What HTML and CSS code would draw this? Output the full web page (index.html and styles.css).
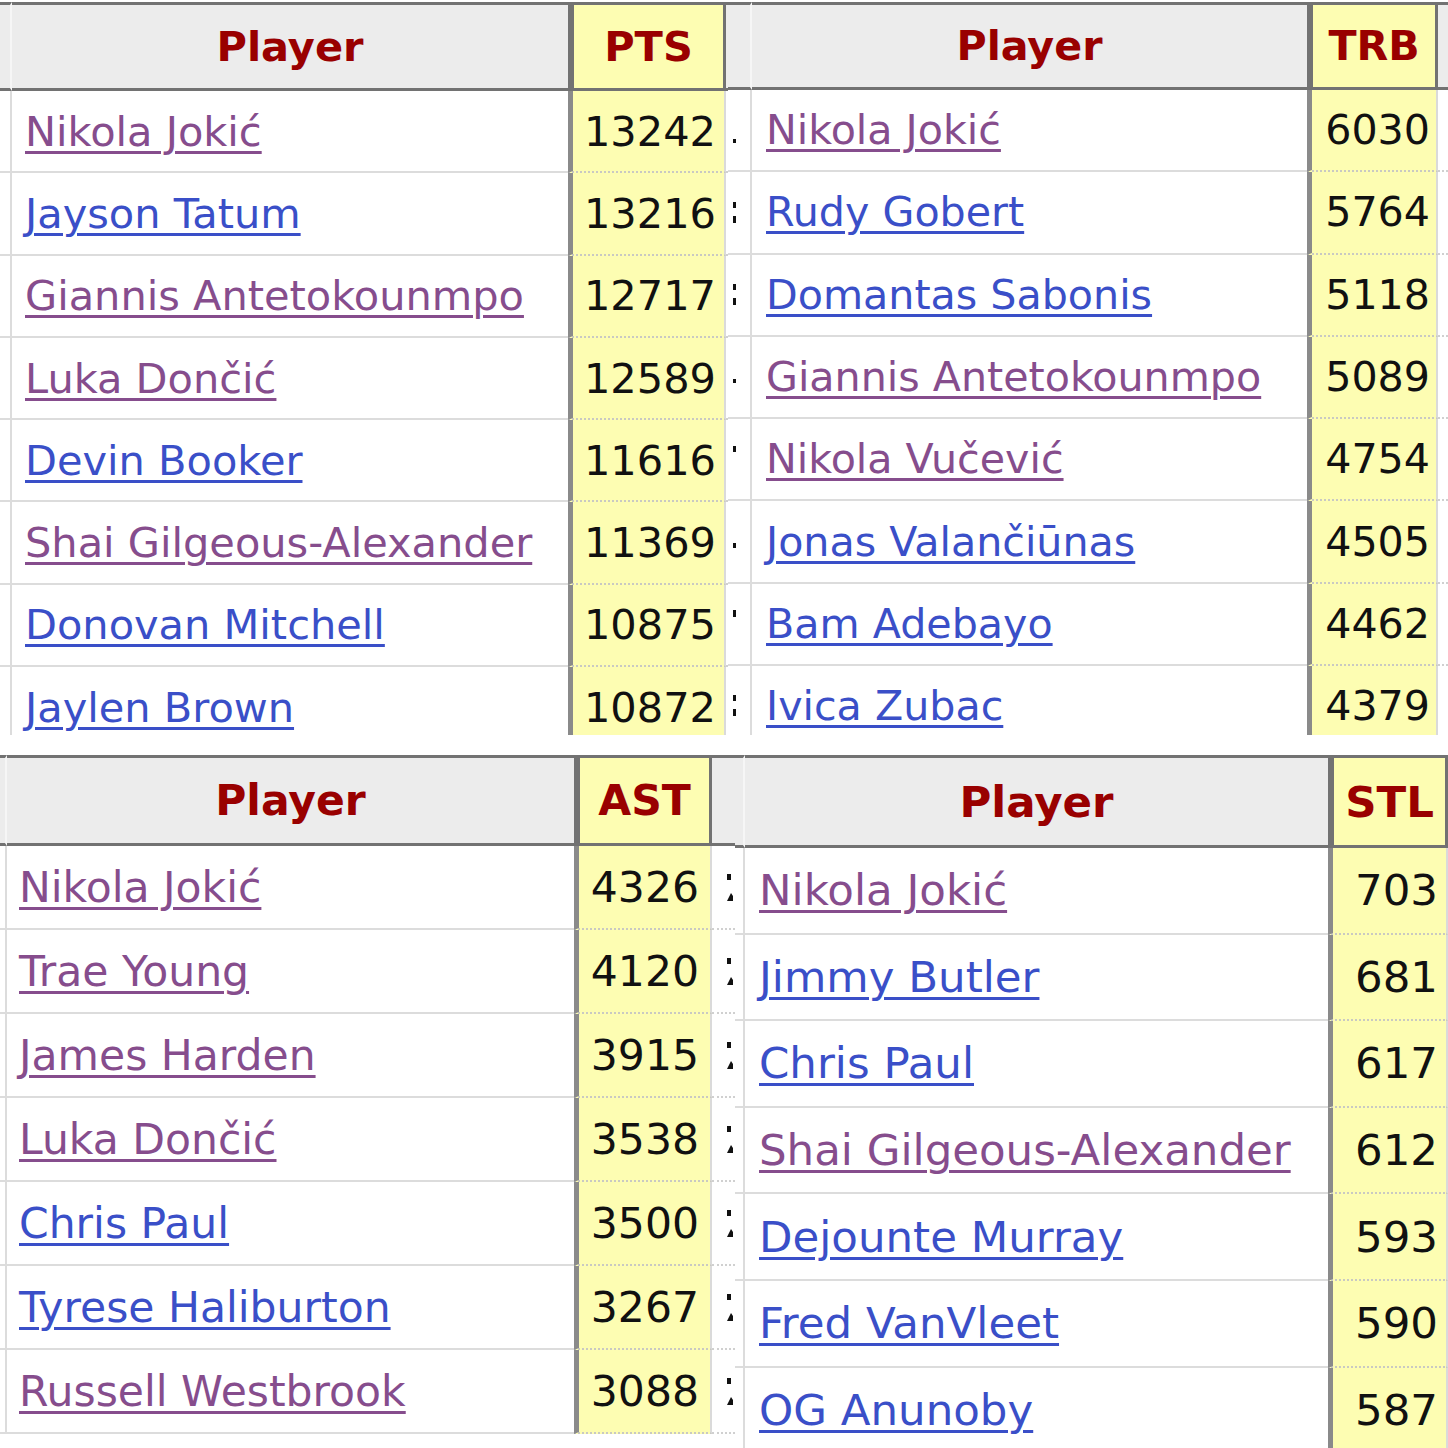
FILE: index.html
```html
<!DOCTYPE html>
<html lang="en">
<head>
<meta charset="utf-8">
<title>Career leaders</title>
<link rel="stylesheet" href="styles.css">
</head>
<body>
<main class="collage">
  <div class="band band-top">
    <section class="panel p1">
      <div class="c cut h"></div><div class="c pl h">Player</div><div class="c st h">PTS</div><div class="c cutr h"></div>

      <div class="c cut d"></div><div class="c pl d"><a class="v" href="#">Nikola Jokić</a></div><div class="c st d">13242</div><div class="c cutr d"></div>
      <div class="c cut d"></div><div class="c pl d"><a class="u" href="#">Jayson Tatum</a></div><div class="c st d">13216</div><div class="c cutr d"></div>
      <div class="c cut d"></div><div class="c pl d"><a class="v" href="#">Giannis Antetokounmpo</a></div><div class="c st d">12717</div><div class="c cutr d"></div>
      <div class="c cut d"></div><div class="c pl d"><a class="v" href="#">Luka Dončić</a></div><div class="c st d">12589</div><div class="c cutr d"></div>
      <div class="c cut d"></div><div class="c pl d"><a class="u" href="#">Devin Booker</a></div><div class="c st d">11616</div><div class="c cutr d"></div>
      <div class="c cut d"></div><div class="c pl d"><a class="v" href="#">Shai Gilgeous-Alexander</a></div><div class="c st d">11369</div><div class="c cutr d"></div>
      <div class="c cut d"></div><div class="c pl d"><a class="u" href="#">Donovan Mitchell</a></div><div class="c st d">10875</div><div class="c cutr d"></div>
      <div class="c cut d"></div><div class="c pl d"><a class="u" href="#">Jaylen Brown</a></div><div class="c st d">10872</div><div class="c cutr d"></div>
    </section>

    <section class="panel p2">
      <div class="c cut h"></div><div class="c pl h">Player</div><div class="c st h">TRB</div><div class="c cutr h"></div>

      <div class="c cut d"><svg class="frag" viewBox="0 0 4 32" width="4" height="32"><rect x="0" y="25" width="3" height="4"/></svg></div><div class="c pl d"><a class="v" href="#">Nikola Jokić</a></div><div class="c st d">6030</div><div class="c cutr d"></div>
      <div class="c cut d"><svg class="frag" viewBox="0 0 4 32" width="4" height="32"><rect x="0" y="6" width="3" height="6"/><rect x="0" y="20" width="3" height="7"/></svg></div><div class="c pl d"><a class="u" href="#">Rudy Gobert</a></div><div class="c st d">5764</div><div class="c cutr d"></div>
      <div class="c cut d"><svg class="frag" viewBox="0 0 4 32" width="4" height="32"><rect x="0" y="5" width="3" height="6"/><rect x="0" y="19" width="3" height="7"/></svg></div><div class="c pl d"><a class="u" href="#">Domantas Sabonis</a></div><div class="c st d">5118</div><div class="c cutr d"></div>
      <div class="c cut d"><svg class="frag" viewBox="0 0 4 32" width="4" height="32"><rect x="0" y="18" width="3" height="4"/></svg></div><div class="c pl d"><a class="v" href="#">Giannis Antetokounmpo</a></div><div class="c st d">5089</div><div class="c cutr d"></div>
      <div class="c cut d"><svg class="frag" viewBox="0 0 4 32" width="4" height="32"><rect x="0" y="3" width="3" height="6"/></svg></div><div class="c pl d"><a class="v" href="#">Nikola Vučević</a></div><div class="c st d">4754</div><div class="c cutr d"></div>
      <div class="c cut d"><svg class="frag" viewBox="0 0 4 32" width="4" height="32"><rect x="0" y="17" width="3" height="5"/></svg></div><div class="c pl d"><a class="u" href="#">Jonas Valančiūnas</a></div><div class="c st d">4505</div><div class="c cutr d"></div>
      <div class="c cut d"><svg class="frag" viewBox="0 0 4 32" width="4" height="32"><rect x="0" y="2" width="3" height="7"/></svg></div><div class="c pl d"><a class="u" href="#">Bam Adebayo</a></div><div class="c st d">4462</div><div class="c cutr d"></div>
      <div class="c cut d"><svg class="frag" viewBox="0 0 4 32" width="4" height="32"><rect x="0" y="5" width="3" height="6"/><rect x="0" y="19" width="3" height="7"/></svg></div><div class="c pl d"><a class="u" href="#">Ivica Zubac</a></div><div class="c st d">4379</div><div class="c cutr d"></div>
    </section>
  </div>

  <div class="band band-bottom">
    <section class="panel p3">
      <div class="c cut h"></div><div class="c pl h">Player</div><div class="c st h">AST</div><div class="c cutr h"></div>

      <div class="c cut d"></div><div class="c pl d"><a class="v" href="#">Nikola Jokić</a></div><div class="c st d">4326</div><div class="c cutr d"><svg class="frag2" viewBox="0 0 6 32" width="6" height="32"><rect x="0" y="3" width="4" height="6"/><polygon points="0,30 6,30 6,25 4,22"/></svg></div>
      <div class="c cut d"></div><div class="c pl d"><a class="v" href="#">Trae Young</a></div><div class="c st d">4120</div><div class="c cutr d"><svg class="frag2" viewBox="0 0 6 32" width="6" height="32"><rect x="0" y="3" width="4" height="6"/><polygon points="0,30 6,30 6,25 4,22"/></svg></div>
      <div class="c cut d"></div><div class="c pl d"><a class="v" href="#">James Harden</a></div><div class="c st d">3915</div><div class="c cutr d"><svg class="frag2" viewBox="0 0 6 32" width="6" height="32"><rect x="0" y="3" width="4" height="6"/><polygon points="0,30 6,30 6,25 4,22"/></svg></div>
      <div class="c cut d"></div><div class="c pl d"><a class="v" href="#">Luka Dončić</a></div><div class="c st d">3538</div><div class="c cutr d"><svg class="frag2" viewBox="0 0 6 32" width="6" height="32"><rect x="0" y="3" width="4" height="6"/><polygon points="0,30 6,30 6,25 4,22"/></svg></div>
      <div class="c cut d"></div><div class="c pl d"><a class="u" href="#">Chris Paul</a></div><div class="c st d">3500</div><div class="c cutr d"><svg class="frag2" viewBox="0 0 6 32" width="6" height="32"><rect x="0" y="3" width="4" height="6"/><polygon points="0,30 6,30 6,25 4,22"/></svg></div>
      <div class="c cut d"></div><div class="c pl d"><a class="u" href="#">Tyrese Haliburton</a></div><div class="c st d">3267</div><div class="c cutr d"><svg class="frag2" viewBox="0 0 6 32" width="6" height="32"><rect x="0" y="3" width="4" height="6"/><polygon points="0,30 6,30 6,25 4,22"/></svg></div>
      <div class="c cut d"></div><div class="c pl d"><a class="v" href="#">Russell Westbrook</a></div><div class="c st d">3088</div><div class="c cutr d"><svg class="frag2" viewBox="0 0 6 32" width="6" height="32"><rect x="0" y="3" width="4" height="6"/><polygon points="0,30 6,30 6,25 4,22"/></svg></div>
    </section>

    <section class="panel p4">
      <div class="c cut h"></div><div class="c pl h">Player</div><div class="c st h">STL</div>

      <div class="c cut d"></div><div class="c pl d"><a class="v" href="#">Nikola Jokić</a></div><div class="c st d">703</div>
      <div class="c cut d"></div><div class="c pl d"><a class="u" href="#">Jimmy Butler</a></div><div class="c st d">681</div>
      <div class="c cut d"></div><div class="c pl d"><a class="u" href="#">Chris Paul</a></div><div class="c st d">617</div>
      <div class="c cut d"></div><div class="c pl d"><a class="v" href="#">Shai Gilgeous-Alexander</a></div><div class="c st d">612</div>
      <div class="c cut d"></div><div class="c pl d"><a class="u" href="#">Dejounte Murray</a></div><div class="c st d">593</div>
      <div class="c cut d"></div><div class="c pl d"><a class="u" href="#">Fred VanVleet</a></div><div class="c st d">590</div>
      <div class="c cut d"></div><div class="c pl d"><a class="u" href="#">OG Anunoby</a></div><div class="c st d">587</div>
    </section>
  </div>
</main>
</body>
</html>
```

FILE: styles.css
```css
html, body {
  margin: 0;
  padding: 0;
  background: #ffffff;
}

.collage {
  width: 1448px;
  height: 1448px;
  display: flex;
  flex-direction: column;
  gap: 20px;
  overflow: hidden;
  font-family: "DejaVu Sans", Verdana, sans-serif;
  color: #111111;
}

.band {
  display: flex;
  overflow: hidden;
}

.band-top { height: 735px; flex: none; }
.band-bottom { height: 693px; flex: none; }

.panel {
  display: grid;
  overflow: hidden;
  height: 100%;
  box-sizing: border-box;
  align-content: start;
  flex: none;
}

/* Panel geometry */
.p1 {
  width: 728px;
  padding-top: 2px;
  font-size: 41.5px;
  grid-template-columns: 12px 556px 158px 2px;
  grid-template-rows: 89px;
  grid-auto-rows: 82.3px;
}
.p2 {
  width: 720px;
  padding-top: 2px;
  font-size: 41.2px;
  grid-template-columns: 24px 555px 131px 10px;
  grid-template-rows: 88px;
  grid-auto-rows: 82.3px;
}
.p3 {
  width: 735px;
  font-size: 42.5px;
  grid-template-columns: 7px 567px 138px 23px;
  grid-template-rows: 91px;
  grid-auto-rows: 84px;
}
.p4 {
  width: 713px;
  font-size: 43.5px;
  grid-template-columns: 10px 583px 120px;
  grid-template-rows: 93px;
  grid-auto-rows: 86.6px;
}

/* Cells */
.c {
  box-sizing: border-box;
  display: flex;
  align-items: center;
  overflow: hidden;
  white-space: nowrap;
  min-width: 0;
}

.h {
  background: #ececec;
  border-top: 3px solid #727272;
  border-bottom: 3px solid #727272;
  color: #990000;
  font-weight: bold;
  justify-content: center;
}

.h.cut {
  border-right: 2px solid #f6f6f6;
}

.h.st {
  background: #fdfdb2;
  border-left: 6px solid #727272;
  border-right: 3px solid #727272;
}

.d {
  background: #ffffff;
  border-bottom: 2px solid #dcdcdc;
}

.d.cut {
  border-right: 2px solid #dcdcdc;
}

.d.pl {
  padding-left: 13px;
}

.p2 .d.pl { padding-left: 14px; }
.p3 .d.pl { padding-left: 12px; }
.p4 .d.pl { padding-left: 14px; }

.d.st {
  background: #fdfdb2;
  border-left: 5px solid #8a8a8a;
  border-right: 2px solid #dadada;
  border-bottom: 2px dotted #c9c9c2;
  justify-content: flex-end;
  padding-right: 8px;
}

.p2 .d.st { padding-right: 6px; }
.p3 .d.st { padding-right: 11px; }
.p4 .d.st { padding-right: 8px; }

.d.cutr {
  border-bottom: 2px dotted #d0d0d0;
}

.p2 .d.cut {
  padding-left: 5px;
}

.p3 .d.cutr {
  padding-left: 15px;
}

.frag, .frag2 {
  flex: none;
  fill: #111111;
  display: block;
}

a {
  text-decoration: underline;
  text-decoration-thickness: 3px;
  text-underline-offset: 5px;
}

a.v { color: #864d8d; }
a.u { color: #3a4fc8; }
```
